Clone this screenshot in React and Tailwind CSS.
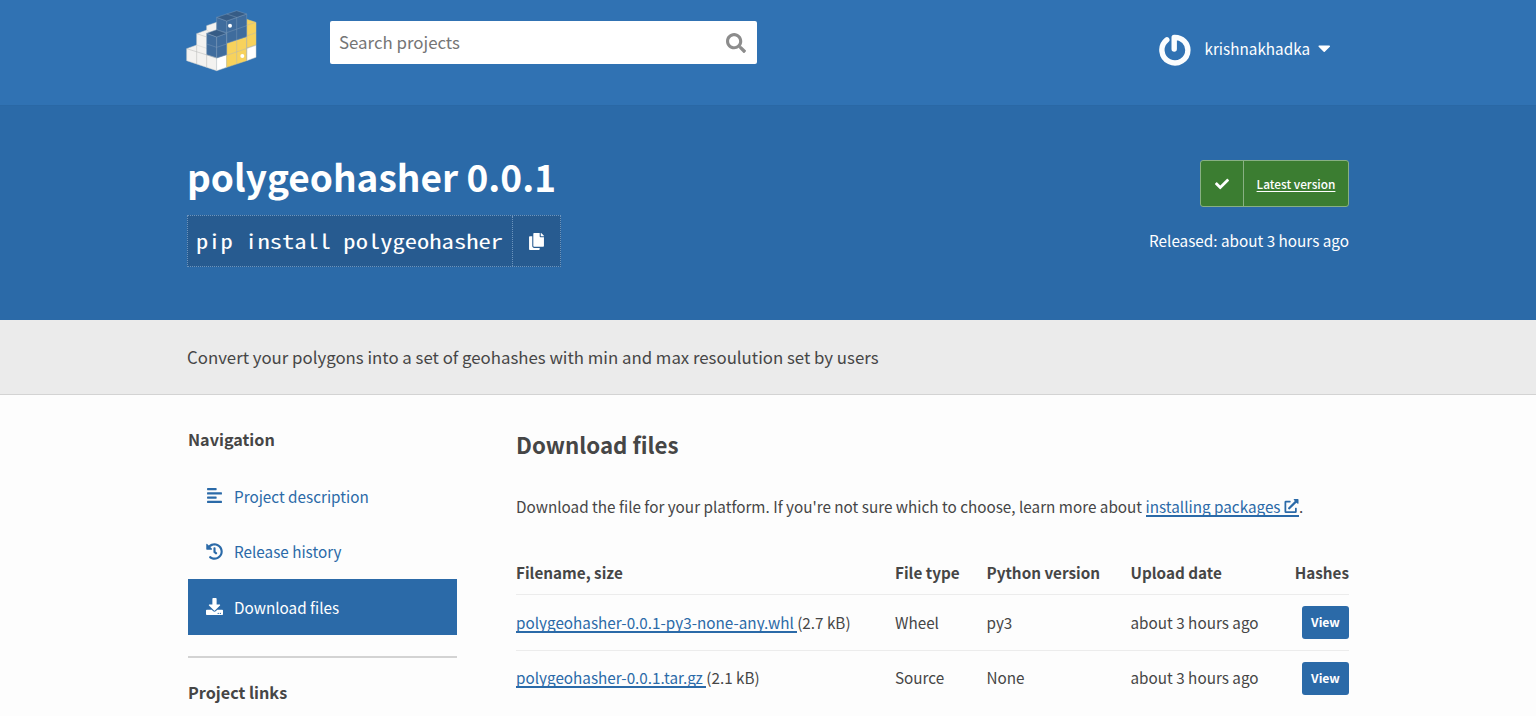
import React from "react";
import {
  FaSearch, FaCaretDown, FaCheck, FaCopy, FaAlignLeft, FaHistory, FaDownload, FaExternalLinkAlt,
} from "react-icons/fa";

function Logo() {
  return (
    <svg viewBox="30 30 213 186" className="h-[62px] w-[71px]" strokeLinejoin="round">
      <g fill="#f3f2f0" stroke="#cfd0cf" strokeWidth="1.5">
        <path d="M92 77l30-10v40l-30-8z" />
        <path d="M62 101l30-11 30 20v62l-60-20z" />
        <path d="M32 146l30-11 60 20v57l-90-30z" />
      </g>
      <g fill="#ffffff" stroke="#cfd0cf" strokeWidth="1.5">
        <path d="M122 174l30-10v38l-30 10z" />
        <path d="M212 144l28-10v38l-28 10z" />
      </g>
      <g fill="#f7d25c" stroke="#d5c583" strokeWidth="1.5">
        <path d="M152 130l60-20v72l-60 20z" />
        <path d="M212 58l28 9v67l-28 10z" />
      </g>
      <g fill="#3f6c9d" stroke="#7897b6" strokeWidth="1.5">
        <path d="M92 100l30 11v63l-30-10z" />
        <path d="M122 52l30 11v35l-30-8z" />
        <path d="M122 111l30-11v64l-30 10z" />
        <path d="M152 63l60-21v68l-60 20z" />
      </g>
      <g fill="#365c86" stroke="#7897b6" strokeWidth="1.5">
        <path d="M92 100l30-11 30 11-30 11z" />
        <path d="M122 52l60-20 30 10-60 21z" />
        <path d="M152 42l30 10" />
      </g>
      <g fill="none" stroke="#b4b7b4" strokeWidth="1.5">
        <path d="M62 136v56M92 164v38M32 146l90 28M62 101l30 10" />
        <path d="M152 166l88-30M212 108l28-10M212 110v72M182 120v72M212 76l28-9" />
      </g>
      <g fill="none" stroke="#7897b6" strokeWidth="1.5">
        <path d="M92 132l30 10 30-10M152 98l60-21M182 52v68M152 98v32" />
      </g>
      <circle cx="162" cy="77" r="6" fill="#fff" />
      <circle cx="199" cy="168" r="6" fill="#fff" />
    </svg>
  );
}

function Avatar() {
  return (
    <svg viewBox="0 0 34 34" className="h-[34px] w-[34px]" fill="none" stroke="#fbfdfe" strokeWidth="5.4" strokeLinecap="round" strokeLinejoin="round">
      <path d="M16.2 16V4.4C24.6 4.1 29.9 10.4 29.9 17A13 13 0 1 1 8.8 6.8" />
    </svg>
  );
}

const navigation = [
  { label: "Project description", Icon: FaAlignLeft, active: false },
  { label: "Release history", Icon: FaHistory, active: false },
  { label: "Download files", Icon: FaDownload, active: true },
];

const files = [
  { name: "polygeohasher-0.0.1-py3-none-any.whl", size: "(2.7 kB)", type: "Wheel", py: "py3" },
  { name: "polygeohasher-0.0.1.tar.gz", size: "(2.1 kB)", type: "Source", py: "None" },
];

const cols = "grid grid-cols-[379px_91.5px_144px_1fr_auto]";

export default function App() {
  return (
    <div className="h-[716px] w-[1536px] overflow-hidden bg-[#fdfdfd] font-['Noto_Sans_CJK_SC',sans-serif] text-[15.28px] leading-6 text-[#464646]">
      <header className="h-[106px] border-b border-[#2a68a5] bg-[#3072b3] text-white">
        <div className="ml-[186px] flex w-[1163px] items-start">
          <div className="mt-[10px]"><Logo /></div>
          <div className="ml-[73.4px] mt-[21px] flex h-[43px] w-[427px] items-center justify-between rounded-[2px] bg-white pl-[8.6px] pr-[11.4px] text-[#757575]">
            <span className="pb-px text-[16.85px]">Search projects</span>
            <FaSearch className="h-5 w-5 text-[#8c8c8c]" />
          </div>
          <div className="ml-auto mr-[19px] mt-[33px] flex items-center">
            <Avatar />
            <span className="ml-[13px] pb-[5px]">krishnakhadka</span>
            <FaCaretDown className="mb-[4px] ml-[7.5px] h-5 w-[12.5px]" />
          </div>
        </div>
      </header>

      <section className="h-[214px] bg-[#2b6aa8] text-white">
        <div className="ml-[187px] flex w-[1162px] justify-between">
          <div className="mt-[42px]">
            <h1 className="text-[37px] font-bold leading-[56px]">polygeohasher 0.0.1</h1>
            <div className="mt-[11px] flex h-[52px] w-[374px] border border-dotted border-[#6c94bd] bg-[#275b90]">
              <div className="flex w-[325px] items-center border-r border-dotted border-[#6c94bd] pl-[8px] font-['Noto_Sans_Mono_CJK_SC',monospace] text-[20px] font-medium">
                <span className="origin-left scale-x-[1.228] whitespace-nowrap">pip install polygeohasher</span>
              </div>
              <div className="flex flex-1 items-center justify-center"><FaCopy className="h-[17px] w-[15px]" /></div>
            </div>
          </div>
          <div className="mt-[54px] flex flex-col items-end">
            <div className="flex h-[47px] w-[149px] rounded-[3px] border border-[#88b083] bg-[#3b7d31]">
              <div className="flex w-[43px] items-center justify-center border-r border-[#88b083]"><FaCheck className="h-[14px] w-[14px]" /></div>
              <div className="flex flex-1 items-center justify-center text-[11.85px] font-medium"><span className="underline underline-offset-2">Latest version</span></div>
            </div>
            <p className="mt-[21px]">Released: about 3 hours ago</p>
          </div>
        </div>
      </section>

      <section className="flex h-[75px] items-center border-b border-[#d3d3d3] bg-[#ebebeb] pl-[187px] text-[16.81px]">
        <p>Convert your polygons into a set of geohashes with min and max resoulution set by users</p>
      </section>

      <main className="ml-[188px] flex w-[1161px]">
        <nav className="w-[268.5px] pt-[32px]">
          <h2 className="text-[16.2px] font-bold">Navigation</h2>
          <ul className="mt-[17px]">
            {navigation.map(({ label, Icon, active }) => (
              <li key={label} className={"flex h-[55.5px] items-center pl-[18px] " + (active ? "bg-[#2b6aa8] text-white" : "text-[#2b6aa8]")}>
                <Icon className="mr-[11px] h-[17px] w-[17px]" />
                <span>{label}</span>
              </li>
            ))}
          </ul>
          <hr className="mt-[21.5px] border-t-2 border-[#d3d3d3]" />
          <h2 className="mt-[21.5px] text-[16.2px] font-bold">Project links</h2>
        </nav>
        <div className="ml-[59.5px] flex-1 pt-[32px]">
          <h1 className="text-[22.3px] font-bold leading-[34px]">Download files</h1>
          <p className="mt-[33px] flex h-6 whitespace-pre">
            Download the file for your platform. If you're not sure which to choose, learn more about{" "}
            <a className="flex h-[23px] items-center border-b-2 border-[#2b6aa8] text-[#2b6aa8]">
              <span className="mt-[2px]">installing packages </span>
              <FaExternalLinkAlt className="mt-[2px] h-[14px] w-[15px]" />
            </a>
            .
          </p>
          <div className={cols + " mt-[42px] h-[35px] border-b border-[#ececec] font-bold"}>
            <div>Filename, size</div>
            <div>File type</div>
            <div>Python version</div>
            <div>Upload date</div>
            <div>Hashes</div>
          </div>
          {files.map((f, i) => (
            <div key={f.name} className={cols + " items-center leading-[22px] " + (i === 0 ? "h-[56px] border-b border-[#ececec]" : "h-[54px]")}>
              <div className="flex whitespace-pre pb-[2px]">
                <a className="h-[22px] border-b-2 border-[#2b6aa8] text-[#2b6aa8]">{f.name + " "}</a>
                {f.size}
              </div>
              <div className="pb-[2px]">{f.type}</div>
              <div className="pb-[2px]">{f.py}</div>
              <div className="pb-[2px]">about 3 hours ago</div>
              <button className="flex h-[33px] w-[47px] items-center justify-center rounded-[3px] bg-[#2b6aa8] pb-px text-[12.2px] font-bold text-white">View</button>
            </div>
          ))}
        </div>
      </main>
    </div>
  );
}
